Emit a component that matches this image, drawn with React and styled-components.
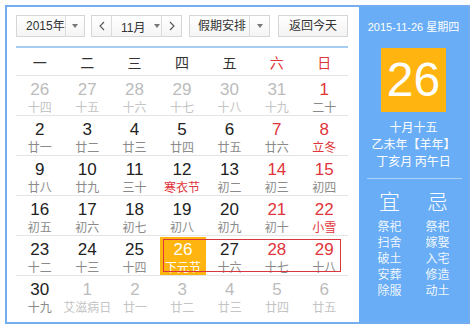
import React from "react";
import styled, { createGlobalStyle, css } from "styled-components";

const Global = createGlobalStyle`
  html, body { margin: 0; padding: 0; background: #fff; }
  body { font-family: "Liberation Sans", "Noto Sans CJK SC", sans-serif; }
`;

const Page = styled.div`
  padding: 5px;
`;

const Calendar = styled.div`
  width: 465px;
  height: 319px;
  box-sizing: border-box;
  border: 2px solid #74aeee;
  display: flex;
`;

const Main = styled.div`
  flex: 1;
  padding: 8px 11px 0 9px;
  display: flex;
  flex-direction: column;
`;

const Toolbar = styled.div`
  display: flex;
  height: 22px;
  font-size: 12px;
  color: #333;
  white-space: nowrap;
`;

const Box = styled.div`
  box-sizing: border-box;
  height: 22px;
  width: ${(p) => p.$w}px;
  margin-right: ${(p) => p.$gap || 0}px;
  border: 1px solid #d6d6d6;
  background: linear-gradient(#ffffff, #f5f5f5);
  display: flex;
  align-items: stretch;
`;

const Label = styled.div`
  flex: 1;
  padding-left: ${(p) => p.$pl || 9}px;
  line-height: 20px;
  white-space: nowrap;
`;

const ArrowCell = styled.div`
  width: ${(p) => p.$w || 20}px;
  border-left: 1px solid #dcdcdc;
  display: flex;
  align-items: center;
  justify-content: center;
`;

const Caret = styled.span`
  display: inline-block;
  flex: none;
  width: 0;
  height: 0;
  border-left: 3px solid transparent;
  border-right: 3px solid transparent;
  border-top: 4px solid #777;
  margin-left: ${(p) => p.$ml || 0}px;
`;

const NavCell = styled.div`
  width: ${(p) => p.$w}px;
  flex: none;
  display: flex;
  align-items: center;
  justify-content: center;
  ${(p) => p.$left && css`border-right: 1px solid #dcdcdc;`}
  ${(p) => p.$right && css`border-left: 1px solid #dcdcdc;`}
`;

const MonthMid = styled.div`
  flex: 1;
  min-width: 0;
  display: flex;
  align-items: center;
  padding-left: 9px;
  white-space: nowrap;
`;

const Button = styled.div`
  box-sizing: border-box;
  height: 22px;
  width: 70px;
  border: 1px solid #d6d6d6;
  background: linear-gradient(#ffffff, #f3f3f3);
  text-align: center;
  line-height: 20px;
`;

const BlueLine = styled.div`
  height: 2px;
  background: #a6ccf1;
  margin-top: 9px;
`;

const Header = styled.div`
  display: grid;
  grid-template-columns: repeat(7, 1fr);
  height: 27px;
  align-items: center;
  border-bottom: 1px solid #e4e4e4;
`;

const Weekday = styled.div`
  text-align: center;
  font-size: 14px;
  font-family: "Noto Sans CJK SC", sans-serif;
  color: ${(p) => (p.$red ? "#e0353b" : "#333")};
`;

const Week = styled.div`
  position: relative;
  display: grid;
  grid-template-columns: repeat(7, 1fr);
  height: 40px;
  box-sizing: border-box;
  border-bottom: ${(p) => (p.$last ? "none" : "1px solid #e4e4e4")};
`;

const Day = styled.div`
  display: flex;
  flex-direction: column;
  align-items: center;
  padding-top: 4px;
  ${(p) =>
    p.$today &&
    css`
      background: #ffb40f;
      margin: 1px 0 0 2px;
      padding-top: 3px;
      height: 38px;
      box-sizing: border-box;
    `}
`;

const Num = styled.div`
  font-size: 17px;
  line-height: 20px;
  color: ${(p) => p.$c};
`;

const Lunar = styled.div`
  font-size: 12px;
  line-height: 14px;
  font-family: "Noto Sans CJK SC", sans-serif;
  color: ${(p) => p.$c};
  white-space: nowrap;
`;

const Range = styled.div`
  position: absolute;
  top: 3px;
  bottom: 3px;
  left: calc(300% / 7 + 5px);
  right: 7px;
  border: 1px solid #d9363e;
  pointer-events: none;
`;

const Side = styled.div`
  width: 109px;
  background: #68adf6;
  color: #fff;
  text-align: center;
  display: flex;
  flex-direction: column;
  align-items: center;
`;

const DateLine = styled.div`
  margin-top: 12px;
  font-size: 11px;
  line-height: 16px;
  white-space: nowrap;
`;

const BigDay = styled.div`
  margin-top: 13px;
  width: 65px;
  height: 64px;
  background: #ffb40f;
  font-size: 48px;
  line-height: 64px;
  color: #fff;
`;

const LunarInfo = styled.div`
  margin-top: 6px;
  font-size: 12px;
  line-height: 17px;
  font-family: "Noto Sans CJK SC", sans-serif;
`;

const Divider = styled.div`
  align-self: stretch;
  margin: 9px 6px 0 8px;
  height: 1px;
  background: rgba(255, 255, 255, 0.45);
`;

const Almanac = styled.div`
  display: flex;
  margin-top: 9px;
  font-family: "Noto Sans CJK SC", sans-serif;
`;

const AlmanacCol = styled.div`
  width: 48px;
  display: flex;
  flex-direction: column;
  align-items: center;
`;

const AlmanacHead = styled.div`
  font-size: 21px;
  line-height: 24px;
  margin-bottom: 6px;
  font-weight: 300;
`;

const AlmanacItem = styled.div`
  font-size: 12px;
  line-height: 16px;
  color: rgba(255, 255, 255, 0.92);
`;

const Chevron = ({ dir }) => (
  <svg width="6" height="10" viewBox="0 0 6 10">
    <polyline
      points={dir === "left" ? "5,1 1,5 5,9" : "1,1 5,5 1,9"}
      fill="none"
      stroke="#555"
      strokeWidth="1.1"
    />
  </svg>
);

// type: n normal, o out-of-month, w weekend red, t today
const weeks = [
  [["26", "十四", "o"], ["27", "十五", "o"], ["28", "十六", "o"], ["29", "十七", "o"], ["30", "十八", "o"], ["31", "十九", "o"], ["1", "二十", "w"]],
  [["2", "廿一"], ["3", "廿二"], ["4", "廿三"], ["5", "廿四"], ["6", "廿五"], ["7", "廿六", "w"], ["8", "立冬", "w", true]],
  [["9", "廿八"], ["10", "廿九"], ["11", "三十"], ["12", "寒衣节", "n", true], ["13", "初二"], ["14", "初三", "w"], ["15", "初四", "w"]],
  [["16", "初五"], ["17", "初六"], ["18", "初七"], ["19", "初八"], ["20", "初九"], ["21", "初十", "w"], ["22", "小雪", "w", true]],
  [["23", "十二"], ["24", "十三"], ["25", "十四"], ["26", "下元节", "t"], ["27", "十六"], ["28", "十七", "w"], ["29", "十八", "w"]],
  [["30", "十九"], ["1", "艾滋病日", "o"], ["2", "廿一", "o"], ["3", "廿二", "o"], ["4", "廿三", "o"], ["5", "廿四", "o"], ["6", "廿五", "o"]],
];

const numColor = (t) =>
  t === "o" ? "#bcbcbc" : t === "w" ? "#e0353b" : t === "t" ? "#fff" : "#222";
const lunarColor = (t, fest) =>
  t === "t" ? "#fff" : t === "o" ? "#c4c4c4" : fest ? "#e0353b" : "#8a8a8a";

const yi = ["祭祀", "扫舍", "破土", "安葬", "除服"];
const ji = ["祭祀", "嫁娶", "入宅", "修造", "动土"];

export default function App() {
  return (
    <Page>
      <Global />
      <Calendar>
        <Main>
          <Toolbar>
            <Box $w={69} $gap={6}>
              <Label>2015年</Label>
              <ArrowCell $w={21}>
                <Caret />
              </ArrowCell>
            </Box>
            <Box $w={91} $gap={7}>
              <NavCell $w={19} $left>
                <Chevron dir="left" />
              </NavCell>
              <MonthMid>
                11月
                <Caret $ml={9} />
              </MonthMid>
              <NavCell $w={19} $right>
                <Chevron dir="right" />
              </NavCell>
            </Box>
            <Box $w={81} $gap={8}>
              <Label $pl={8}>假期安排</Label>
              <ArrowCell $w={19}>
                <Caret />
              </ArrowCell>
            </Box>
            <Button>返回今天</Button>
          </Toolbar>
          <BlueLine />
          <Header>
            {["一", "二", "三", "四", "五", "六", "日"].map((d, i) => (
              <Weekday key={d} $red={i >= 5}>
                {d}
              </Weekday>
            ))}
          </Header>
          {weeks.map((w, wi) => (
            <Week key={wi} $last={wi === weeks.length - 1}>
              {w.map(([n, l, t = "n", fest], di) => (
                <Day key={di} $today={t === "t"}>
                  <Num $c={numColor(t)}>{n}</Num>
                  <Lunar $c={lunarColor(t, fest)}>{l}</Lunar>
                </Day>
              ))}
              {wi === 4 && <Range />}
            </Week>
          ))}
        </Main>
        <Side>
          <DateLine>2015-11-26 星期四</DateLine>
          <BigDay>26</BigDay>
          <LunarInfo>
            <div>十月十五</div>
            <div>乙未年【羊年】</div>
            <div>丁亥月 丙午日</div>
          </LunarInfo>
          <Divider />
          <Almanac>
            <AlmanacCol>
              <AlmanacHead>宜</AlmanacHead>
              {yi.map((x) => (
                <AlmanacItem key={x}>{x}</AlmanacItem>
              ))}
            </AlmanacCol>
            <AlmanacCol>
              <AlmanacHead>忌</AlmanacHead>
              {ji.map((x) => (
                <AlmanacItem key={x}>{x}</AlmanacItem>
              ))}
            </AlmanacCol>
          </Almanac>
        </Side>
      </Calendar>
    </Page>
  );
}
